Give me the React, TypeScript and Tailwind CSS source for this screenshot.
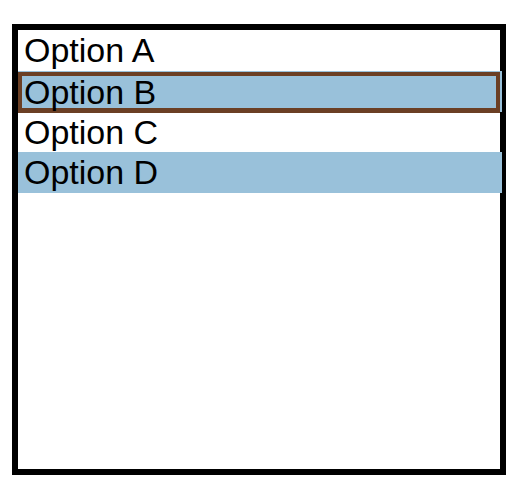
import React from "react";

const options = ["Option A", "Option B", "Option C", "Option D"];

export default function App() {
  return (
    <div className="w-[524px] h-[490px] bg-white pt-[24px] pl-[12px]" style={{ fontFamily: '"Liberation Sans", Arial, sans-serif' }}>
      {/* List box */}
      <div className="w-[494px] h-[451px] border-[6px] border-black">
        <div className="flex flex-col w-[484px]">
          {options.map((opt, i) => {
            const selected = i === 1 || i === 3;
            const focused = i === 1;
            if (focused) {
              return (
                <div key={opt} className="h-[41px] bg-[#99c1da] pt-[1px]">
                  <div className="h-[41px] w-[482px] border-4 border-b-[5px] border-[#6b3f24] flex items-center pl-[2px] text-[34px] leading-none text-black">
                    {opt}
                  </div>
                </div>
              );
            }
            return (
              <div
                key={opt}
                className={`h-[40.5px] flex items-center pl-[6px] text-[34px] leading-none text-black ${
                  selected ? "bg-[#99c1da]" : ""
                }`}
              >
                {opt}
              </div>
            );
          })}
        </div>
      </div>
    </div>
  );
}
